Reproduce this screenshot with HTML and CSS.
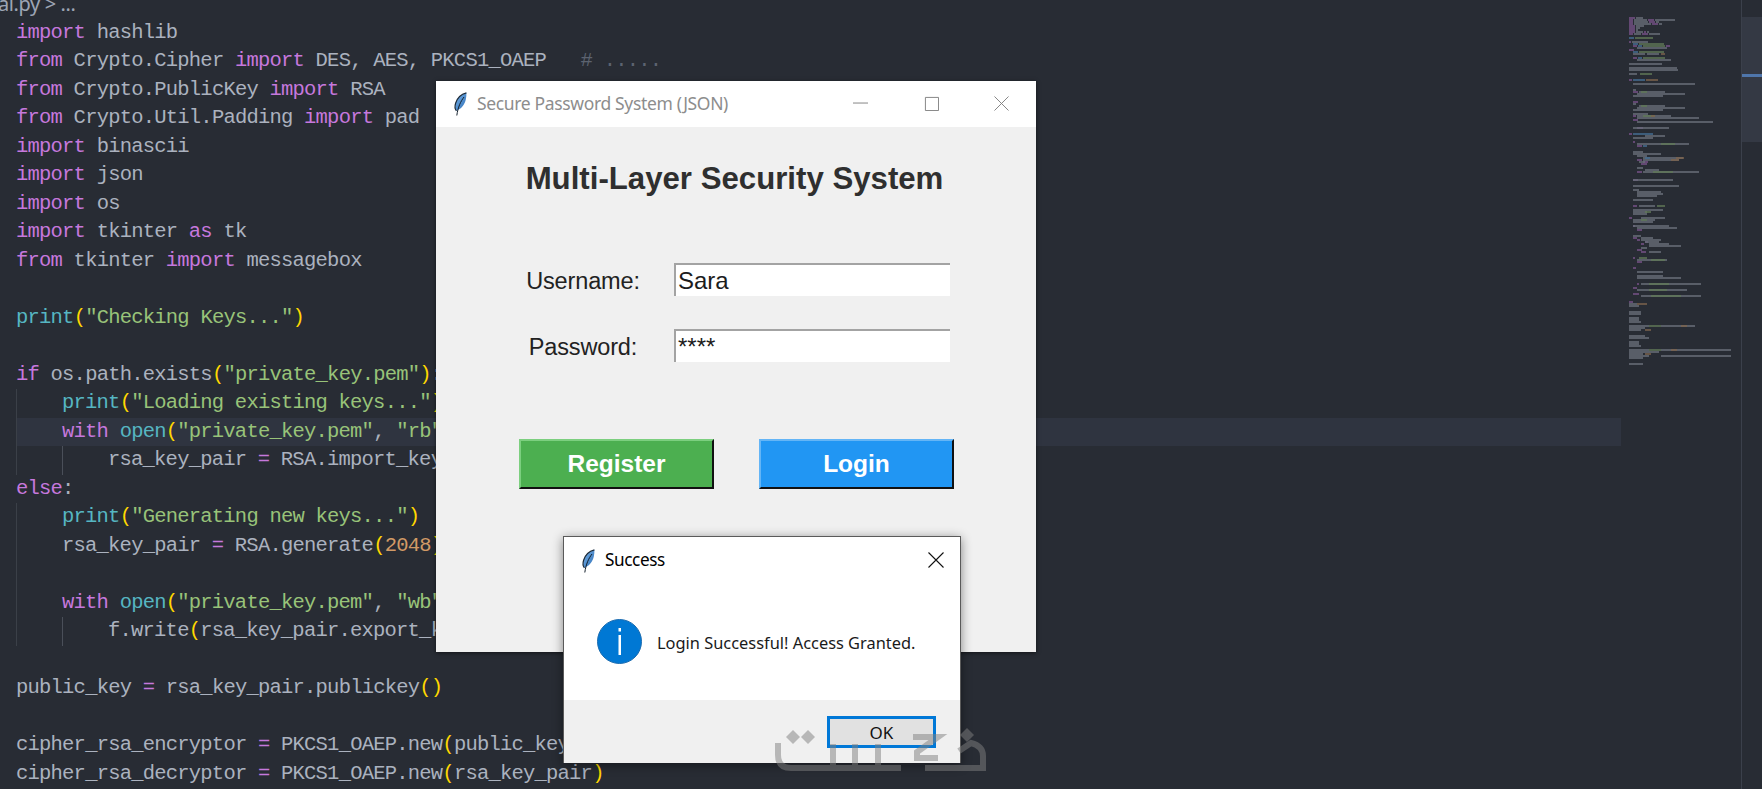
FILE: index.html
```html
<!DOCTYPE html>
<html lang="en">
<head>
<meta charset="utf-8">
<title>Secure Password System</title>
<link rel="stylesheet" href="styles.css">
</head>
<body>
<svg width="0" height="0" class="defs">
  <defs>
    <linearGradient id="fg" x1="0" y1="0" x2="1" y2="1">
      <stop offset="0" stop-color="#7db4ea"/>
      <stop offset="1" stop-color="#2a6db5"/>
    </linearGradient>
    <symbol id="feather" viewBox="0 0 14 24">
      <path d="M13.400 .8C8.600 2 4.200 6 2.600 11.200 1.600 14.400 2 17.200 3.400 18.800 8 17.400 11.600 13 12.800 7.600 13.300 5.200 13.500 2.800 13.400 .8Z" fill="url(#fg)"/>
      <path d="M13.400 .8C8.600 2 4.200 6 2.600 11.200 1.600 14.400 2 17.200 3.400 18.800" fill="none" stroke="#1c2a38" stroke-width="1.200"/>
      <path d="M11 5C7.600 9.500 5 15 3.800 23.500" fill="none" stroke="#14202c" stroke-width="1"/>
    </symbol>
  </defs>
</svg>
<div class="editor">
  <main class="pane">
    <div class="crumb">ai.py &gt; ...</div>
    <div class="line"><span class="k">import</span> hashlib</div>
    <div class="line"><span class="k">from</span> Crypto.Cipher <span class="k">import</span> DES, AES, PKCS1_OAEP   <span class="c"># .....</span></div>
    <div class="line"><span class="k">from</span> Crypto.PublicKey <span class="k">import</span> RSA</div>
    <div class="line"><span class="k">from</span> Crypto.Util.Padding <span class="k">import</span> pad</div>
    <div class="line"><span class="k">import</span> binascii</div>
    <div class="line"><span class="k">import</span> json</div>
    <div class="line"><span class="k">import</span> os</div>
    <div class="line"><span class="k">import</span> tkinter <span class="k">as</span> tk</div>
    <div class="line"><span class="k">from</span> tkinter <span class="k">import</span> messagebox</div>
    <div class="line"></div>
    <div class="line"><span class="f">print</span><span class="p">(</span><span class="s">"Checking Keys..."</span><span class="p">)</span></div>
    <div class="line"></div>
    <div class="line"><span class="k">if</span> os.path.exists<span class="p">(</span><span class="s">"private_key.pem"</span><span class="p">)</span>:</div>
    <div class="line g1"><span class="f">print</span><span class="p">(</span><span class="s">"Loading existing keys..."</span><span class="p">)</span></div>
    <div class="line g1 active"><span class="k">with</span> <span class="f">open</span><span class="p">(</span><span class="s">"private_key.pem"</span>, <span class="s">"rb"</span><span class="p">)</span> <span class="k">as</span> f:</div>
    <div class="line g2">rsa_key_pair <span class="o">=</span> RSA.import_key<span class="p">(</span>f.read()<span class="p">)</span></div>
    <div class="line"><span class="k">else</span>:</div>
    <div class="line g1"><span class="f">print</span><span class="p">(</span><span class="s">"Generating new keys..."</span><span class="p">)</span></div>
    <div class="line g1">rsa_key_pair <span class="o">=</span> RSA.generate<span class="p">(</span><span class="n">2048</span><span class="p">)</span></div>
    <div class="line g1"></div>
    <div class="line g1"><span class="k">with</span> <span class="f">open</span><span class="p">(</span><span class="s">"private_key.pem"</span>, <span class="s">"wb"</span><span class="p">)</span> <span class="k">as</span> f:</div>
    <div class="line g2">f.write<span class="p">(</span>rsa_key_pair.export_key()<span class="p">)</span></div>
    <div class="line"></div>
    <div class="line">public_key <span class="o">=</span> rsa_key_pair.publickey<span class="p">()</span></div>
    <div class="line"></div>
    <div class="line">cipher_rsa_encryptor <span class="o">=</span> PKCS1_OAEP.new<span class="p">(</span>public_key<span class="p">)</span></div>
    <div class="line">cipher_rsa_decryptor <span class="o">=</span> PKCS1_OAEP.new<span class="p">(</span>rsa_key_pair<span class="p">)</span></div>
  </main>
  <svg class="minimap" viewBox="0 0 141 789" width="141" height="789" aria-hidden="true">
    <rect x="120" y="17" width="21" height="125" fill="#343944"/>
    <rect x="120" y="74" width="21" height="3" fill="#4f76ab"/>
    <rect x="120" y="0" width="1" height="789" fill="#3b404b"/>
    <g stroke-width="1.300" fill="none" opacity=".5">
      <path stroke="#c678dd" d="M8 18h6M8 20h4M27 20h6M8 22h4M28 22h6M8 24h4M31 24h6M8 26h6M8 28h6M8 30h6M8 32h6M23 32h2M8 34h4M21 34h6M8 42h2M12 46h4M45 46h4M8 50h5M12 58h4M8 80h3M12 92h5M12 102h5M12 116h3M12 120h5M16 128h6M8 134h3M12 142h2M16 146h5M16 160h5M22 162h5M20 164h6M16 172h5M12 180h5M12 206h4M8 218h3M12 226h2M16 230h5M12 238h4M16 240h3M24 242h3M20 244h3M16 250h5M20 252h5M12 258h2M16 262h5M12 268h3M16 284h2M12 288h4M12 294h6M8 302h4"/>
      <path stroke="#abb2bf" d="M15 18h7M13 20h13M34 20h20M13 22h14M35 22h3M13 24h17M38 24h3M15 26h8M15 28h4M15 30h2M15 32h7M26 32h2M13 34h7M28 34h11M11 42h16M16 48h30M12 54h12M26 54h12M16 60h34M8 64h33M8 68h48M8 70h49M8 74h8M12 84h62M12 90h3M18 92h26M16 94h48M12 96h30M12 104h3M18 106h26M16 108h48M12 110h30M12 114h15M16 116h34M16 118h62M16 122h76M12 128h36M24 136h20M12 138h20M16 144h52M12 152h10M12 154h28M16 156h10M22 158h40M22 160h36M18 162h6M16 168h6M24 170h14M22 172h56M12 180h40M12 186h46M12 190h6M16 192h24M16 194h26M16 196h20M12 200h20M18 206h16M12 210h30M12 212h14M12 214h14M20 218h24M12 220h22M12 222h20M12 226h36M16 228h40M12 236h8M20 238h12M20 240h20M24 242h14M28 244h20M28 246h32M20 248h6M28 252h12M16 260h30M16 272h26M16 276h26M16 278h44M20 284h60M16 290h50M20 296h60M8 304h8M8 306h10M8 312h12M8 314h12M8 318h10M8 320h10M8 322h12M8 326h20M40 326h34M8 328h16M8 330h12M8 336h16M8 338h20M8 342h10M8 344h10M8 346h12M8 350h20M40 350h70M8 352h30M8 354h14M8 356h20M40 356h70M8 358h14M8 364h14"/>
      <path stroke="#61afef" d="M8 38h5M12 44h5M17 46h4M17 58h4M12 52h5M12 80h12M12 134h20M22 146h4M24 158h5"/>
      <path stroke="#98c379" d="M14 38h18M18 44h25M22 46h22M18 52h25M22 58h22M19 74h12M20 92h6M20 106h6M22 116h12M40 144h14M32 172h20M36 206h8M24 212h6M20 220h6M18 258h8M30 260h14M28 284h20M28 290h18M30 296h30M28 326h12M28 350h12"/>
      <path stroke="#d19a66" d="M40 54h4M25 80h12M30 116h4M55 158h8M50 160h8M16 304h10M24 330h6M24 354h6M60 326h6M50 350h6"/>
    </g>
  </svg>
</div>

<section class="win">
  <header class="win-title">
    <svg class="feather"><use href="#feather"/></svg>
    <span class="win-name">Secure Password System (JSON)</span>
    <div class="win-controls">
      <svg class="ctl" viewBox="0 0 16 16"><path d="M0 7.500H16"/></svg>
      <svg class="ctl" viewBox="0 0 16 16"><path d="M1.500 1.500H15.500V15.500H1.500Z"/></svg>
      <svg class="ctl" viewBox="0 0 16 16"><path d="M.5 .5L15.500 15.500M15.500 .5L.5 15.500"/></svg>
    </div>
  </header>
  <div class="win-body">
    <h1 class="heading">Multi-Layer Security System</h1>
    <div class="form">
      <div class="row">
        <label class="label">Username:</label>
        <div class="entry">Sara</div>
      </div>
      <div class="row">
        <label class="label">Password:</label>
        <div class="entry">****</div>
      </div>
    </div>
    <div class="actions">
      <button class="btn btn-green">Register</button>
      <button class="btn btn-blue">Login</button>
    </div>
  </div>
</section>

<section class="dialog">
  <header class="dlg-title">
    <svg class="feather"><use href="#feather"/></svg>
    <span class="dlg-name">Success</span>
    <svg class="dlg-close" viewBox="0 0 16 16"><path d="M.5 .5L15.500 15.500M15.500 .5L.5 15.500"/></svg>
  </header>
  <div class="dlg-msg">
    <svg class="info" viewBox="0 0 45 45">
      <circle cx="22.500" cy="22.500" r="22" fill="#0078d4" stroke="#1b6cb0"/>
      <rect x="21.500" y="9" width="2.500" height="3.500" fill="#fff"/>
      <rect x="21.500" y="16" width="2.500" height="20" fill="#fff"/>
    </svg>
    <p class="dlg-text">Login Successful! Access Granted.</p>
  </div>
  <footer class="dlg-foot">
    <button class="ok">OK</button>
  </footer>
</section>

<svg class="mark" viewBox="0 0 212 46" aria-hidden="true">
  <g fill="none" stroke="#808080" stroke-width="6">
    <path d="M3 13V25Q3 38 16 38H126"/>
    <path d="M58 14V38M80 14V38M103 14V38"/>
    <path d="M138 7H163L142 22V28H163"/>
    <path d="M150 38H208V26Q208 16 196 13L184 21"/>
  </g>
  <g fill="#808080">
    <path d="M11 7L18 0 25 7 18 14Z"/>
    <path d="M26 7L33 0 40 7 33 14Z"/>
    <path d="M185 5L192 -2 199 5 192 12Z"/>
  </g>
</svg>
</body>
</html>
```
FILE: styles.css
```css
html, body {
  margin: 0;
  height: 100%;
  overflow: hidden;
  background: #282c34;
}
.defs { position: absolute; }
.editor {
  display: flex;
  width: 1762px;
  height: 789px;
  overflow: hidden;
  background: #282c34;
}
.pane {
  width: 1621px;
  flex: none;
  font-family: "Liberation Mono", monospace;
  font-size: 20.500px;
  letter-spacing: -0.78px;
  color: #abb2bf;
}
.minimap { flex: none; display: block; }
.crumb {
  height: 18.500px;
  margin-left: -2px;
  font: 20px/8px "Noto Sans", sans-serif;
  letter-spacing: -0.4px;
  color: #9da5b4;
}
.line {
  height: 28.500px;
  line-height: 28.500px;
  padding-left: 16px;
  white-space: pre;
  box-sizing: border-box;
}
.g1 {
  padding-left: 62px;
  background: linear-gradient(#3b4048, #3b4048) 16px 0 / 1px 100% no-repeat;
}
.g2 {
  padding-left: 108px;
  background:
    linear-gradient(#3b4048, #3b4048) 16px 0 / 1px 100% no-repeat,
    linear-gradient(#4a4f59, #4a4f59) 62px 0 / 1px 100% no-repeat;
}
.active { background-color: #2f3440; margin-left: 16px; padding-left: 46px; background-position: 0 0; }
.k { color: #c678dd; }
.f { color: #56b6c2; }
.s { color: #98c379; }
.p { color: #ffd700; }
.n { color: #d19a66; }
.o { color: #c678dd; }
.c { color: #5c6370; }

/* main Tk window */
.win {
  position: absolute;
  left: 436px;
  top: 81px;
  width: 600px;
  height: 571px;
  display: flex;
  flex-direction: column;
  background: #f0f0f0;
  box-shadow: 0 1px 4px rgba(0, 0, 0, .55);
}
.win-title {
  height: 46px;
  flex: none;
  display: flex;
  align-items: center;
  padding-left: 17px;
  background: #fff;
}
.feather { width: 14px; height: 24px; flex: none; }
.win-name {
  margin: 0 0 2px 10px;
  font: 17.500px "Noto Sans", sans-serif;
  letter-spacing: -0.35px;
  color: #8d8d8d;
}
.win-controls {
  margin-left: auto;
  margin-right: 27px;
  display: flex;
  gap: 55.500px;
}
.ctl { width: 15px; height: 15px; fill: none; stroke: #7f7f7f; stroke-width: 1; margin-bottom: 1px; }
.win-body {
  flex: 1;
  display: flex;
  flex-direction: column;
  padding-top: 35px;
}
.heading {
  margin: 0;
  text-align: center;
  height: 34px;
  padding-right: 3px;
  font: bold 31.200px/34px "Liberation Sans", sans-serif;
  color: #2f2f2f;
}
.form {
  margin-top: 67px;
  display: flex;
  flex-direction: column;
  gap: 33px;
  padding-left: 90px;
}
.row { display: flex; align-items: center; height: 33px; }
.label {
  width: 114px;
  padding-top: 4px;
  text-align: center;
  font: 23.500px "Liberation Sans", sans-serif;
  letter-spacing: -0.15px;
  color: #222;
}
.entry {
  margin-left: 34px;
  width: 276px;
  height: 33px;
  box-sizing: border-box;
  padding-left: 2px;
  background: #fff;
  border-top: 2px solid #a3a3a3;
  border-left: 2px solid #a3a3a3;
  font: 24px/32px "Liberation Sans", sans-serif;
  color: #1c1c1c;
}
.actions {
  margin-top: 77px;
  display: flex;
  gap: 45px;
  padding-left: 83px;
}
.btn {
  width: 195px;
  height: 50px;
  padding: 0;
  box-sizing: border-box;
  border: 2px solid;
  font: bold 24.500px "Liberation Sans", sans-serif;
  color: #fff;
}
.btn-green {
  background: #4caf50;
  border-color: #7ccf7f #111 #111 #7ccf7f;
}
.btn-blue {
  background: #2196f3;
  border-color: #64b5f6 #111 #111 #64b5f6;
}

/* message box */
.dialog {
  position: absolute;
  left: 563px;
  top: 536px;
  width: 398px;
  height: 227px;
  box-sizing: border-box;
  display: flex;
  flex-direction: column;
  background: #fff;
  border: 1px solid #5a5a5a;
  border-bottom: 0;
  box-shadow: 0 2px 10px rgba(0, 0, 0, .45);
}
.dlg-title {
  height: 48px;
  flex: none;
  display: flex;
  align-items: center;
  padding: 0 16px 0 17px;
}
.dlg-name {
  margin: 0 0 3px 10px;
  font: 17.200px "Noto Sans", sans-serif;
  letter-spacing: -0.4px;
  color: #000;
}
.dlg-close {
  margin-left: auto;
  width: 16px;
  height: 16px;
  fill: none;
  stroke: #111;
  stroke-width: 1.100;
  margin-bottom: 3px;
}
.dlg-msg {
  flex: 1;
  display: flex;
  align-items: center;
  gap: 15px;
  padding: 0 0 2px 33px;
}
.info { width: 45px; height: 45px; flex: none; }
.dlg-text {
  margin: 2px 0 0;
  font: 16.400px "Noto Sans", sans-serif;
  color: #1a1a1a;
}
.dlg-foot {
  height: 63px;
  flex: none;
  background: #f0f0f0;
  display: flex;
  justify-content: flex-end;
  padding: 16px 24px 0 0;
  box-sizing: border-box;
}
.ok {
  width: 109px;
  height: 32px;
  padding: 0;
  box-sizing: border-box;
  background: #e1e1e1;
  border: 3px solid #0078d7;
  font: 17px "Noto Sans", sans-serif;
  color: #111;
}

/* watermark logo */
.mark {
  position: absolute;
  left: 775px;
  top: 730px;
  width: 212px;
  height: 46px;
  opacity: .5;
  pointer-events: none;
  overflow: visible;
}
```
